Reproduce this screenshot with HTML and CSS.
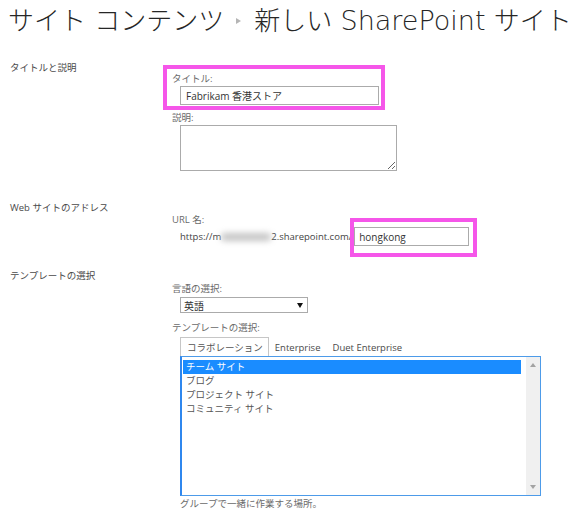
FILE: index.html
```html
<!DOCTYPE html>
<html lang="ja">
<head>
<meta charset="utf-8">
<title>新しい SharePoint サイト</title>
<link rel="stylesheet" href="styles.css">
</head>
<body>
<h1 class="title">サイト コンテンツ<span class="crumb"></span>新しい <span class="latin">SharePoint</span> サイト</h1>

<div class="section s1">
  <div class="sec-label">タイトルと説明</div>
  <div class="sec-body">
    <div class="hl hl-title">
      <div class="flabel first">タイトル:</div>
      <input class="tinput title-input" type="text" value="Fabrikam 香港ストア">
    </div>
    <div class="flabel desc-label">説明:</div>
    <textarea class="desc"></textarea>
  </div>
</div>

<div class="section s2">
  <div class="sec-label">Web サイトのアドレス</div>
  <div class="sec-body">
    <div class="flabel first-url">URL 名:</div>
    <div class="url-row">
      <span class="url-text">https://m<span class="blur"></span>2.sharepoint.com/</span>
      <span class="hl hl-url"><input class="tinput url-input" type="text" value="hongkong"></span>
    </div>
  </div>
</div>

<div class="section s3">
  <div class="sec-label">テンプレートの選択</div>
  <div class="sec-body">
    <div class="flabel first-lang">言語の選択:</div>
    <div class="select"><span>英語</span><span class="caret"></span></div>
    <div class="flabel tpl-label">テンプレートの選択:</div>
    <div class="tabs">
      <span class="tab active">コラボレーション</span>
      <span class="tab">Enterprise</span>
      <span class="tab">Duet Enterprise</span>
    </div>
    <div class="list">
      <div class="rows">
        <div class="row sel">チーム サイト</div>
        <div class="row">ブログ</div>
        <div class="row">プロジェクト サイト</div>
        <div class="row">コミュニティ サイト</div>
      </div>
      <div class="sb">
        <span class="sb-up"></span>
        <span class="sb-down"></span>
      </div>
    </div>
    <div class="hint">グループで一緒に作業する場所。</div>
  </div>
</div>
</body>
</html>
```

FILE: styles.css
```css
* { box-sizing: border-box; }

body {
  margin: 0;
  background: #fff;
  font-family: "Open Sans", "Noto Sans CJK JP", sans-serif;
  font-size: 9.5px;
  color: #4a4a4a;
}

.title {
  margin: 0;
  padding: 3px 0 0 8px;
  font-family: "DejaVu Sans", "Noto Sans CJK JP", sans-serif;
  font-weight: 200;
  font-size: 26px;
  line-height: 36px;
  color: #262626;
  white-space: nowrap;
}

.title .latin {
  font-size: 27px;
}

.crumb {
  display: inline-block;
  width: 0;
  height: 0;
  margin: 0 13px 3px 12px;
  border-top: 3.5px solid transparent;
  border-bottom: 3.5px solid transparent;
  border-left: 5px solid #b5b5b5;
  vertical-align: middle;
}

.section {
  display: grid;
  grid-template-columns: 162px 1fr;
  padding-left: 10px;
}

.s1 { margin-top: 21px; }
.s2 { margin-top: 29px; }
.s3 { margin-top: 22px; }

.sec-label {
  line-height: 15px;
  color: #4a4a4a;
}

.flabel {
  line-height: 15px;
  color: #6a6a6a;
}

.first { margin-top: 0; }

.hl { position: relative; }
.hl::after {
  content: "";
  position: absolute;
  border: 4px solid #f556e9;
  pointer-events: none;
}

.hl-title {
  display: block;
  width: 209px;
  margin-top: 11px;
}
.hl-title::after {
  top: -6px;
  bottom: -5px;
  left: -9px;
  right: -4px;
}

.tinput {
  display: block;
  height: 19px;
  margin: 0;
  padding: 0 5px;
  border: 1px solid #ababab;
  font: inherit;
  font-size: 10px;
  color: #333;
  background: #fff;
  outline: none;
}

.title-input {
  width: 199px;
  margin-left: 8px;
}

.desc-label { margin-top: 5px; }

.desc {
  display: block;
  width: 217px;
  height: 46px;
  margin: 0 0 0 8px;
  border: 1px solid #ababab;
  resize: both;
  font: inherit;
}

.first-url { margin-top: 12px; }

.url-row {
  display: flex;
  align-items: center;
  margin-left: 8px;
}

.url-text {
  font-size: 9.5px;
  color: #444;
  white-space: nowrap;
  margin-right: 2px;
}

.blur {
  display: inline-block;
  width: 50px;
  height: 8px;
  vertical-align: middle;
  background: #c4c4c4;
  border-radius: 4px;
  filter: blur(3px);
}

.hl-url { display: inline-block; }
.hl-url::after {
  top: -9px;
  bottom: -11px;
  left: -4px;
  right: -8px;
}

.url-input {
  width: 115px;
  padding-left: 4px;
}

.first-lang { margin-top: 13px; }

.select {
  display: flex;
  align-items: center;
  justify-content: space-between;
  width: 128px;
  height: 16px;
  margin: 1px 0 0 8px;
  padding: 0 4px 0 3px;
  border: 1px solid #ababab;
  color: #333;
  font-size: 10px;
}

.caret {
  width: 0;
  height: 0;
  border-left: 3px solid transparent;
  border-right: 3px solid transparent;
  border-top: 5px solid #111;
}

.tpl-label { margin-top: 7px; }

.tabs {
  display: flex;
  align-items: stretch;
  height: 19px;
  margin: 2px 0 0 8px;
}

.tab {
  display: flex;
  align-items: center;
  padding: 0 5px 0 5px;
  color: #4a4a4a;
  border: 1px solid transparent;
  border-bottom: 0;
}

.tab.active {
  padding: 0 5px 0 6px;
  border-color: #c6c6c6;
  color: #555;
}

.list {
  display: flex;
  width: 361px;
  height: 140px;
  margin-left: 8px;
  border: 1px solid #4d9be9;
  border-left: 2px solid #2f87ee;
}

.rows {
  flex: 1;
  padding: 3px 2px 0 1px;
}

.row {
  height: 14px;
  line-height: 14px;
  padding-left: 3px;
  color: #555;
}

.row.sel {
  background: #1a8cff;
  color: #fff;
}

.sb {
  width: 14px;
  margin-left: 3px;
  background: #f0f0f0;
  display: flex;
  flex-direction: column;
  justify-content: space-between;
  align-items: center;
  padding: 6px 0 6px;
}

.sb-up, .sb-down {
  width: 0;
  height: 0;
  border-left: 3.5px solid transparent;
  border-right: 3.5px solid transparent;
}

.sb-up { border-bottom: 4px solid #a3a3a3; }
.sb-down { border-top: 4px solid #a3a3a3; }

.hint {
  margin-left: 8px;
  line-height: 15px;
  color: #6a6a6a;
}
```
